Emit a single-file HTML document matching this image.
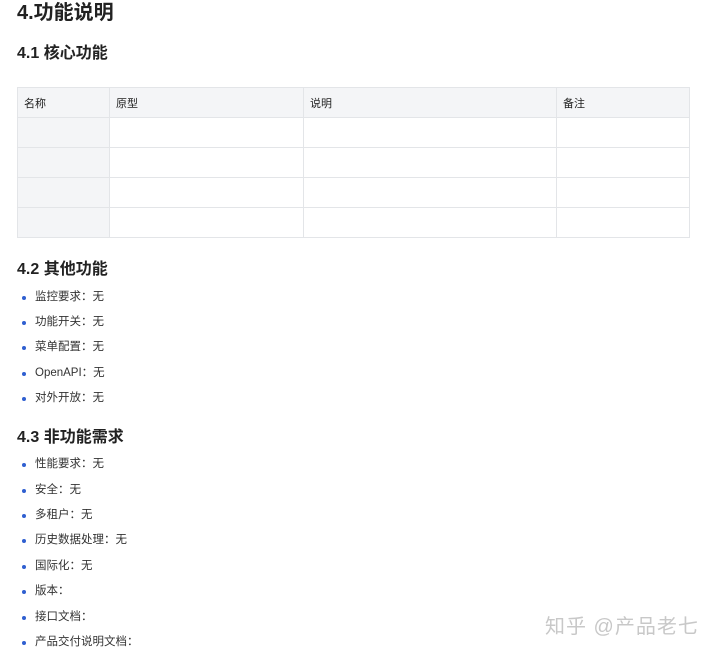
<!DOCTYPE html>
<html><head><meta charset="utf-8"><style>
body{margin:0;width:720px;height:651px;background:#fff;font-family:"Liberation Sans","Noto Sans CJK SC",sans-serif;color:#222;position:relative;overflow:hidden}
h1,h2{margin:0;font-weight:bold;position:absolute;left:17px;line-height:1}
h1{font-size:20px;top:3px}
h2{font-size:16px}
table{position:absolute;left:17px;top:87px;border-collapse:collapse;font-size:11px}
td{border:1px solid #e3e5e8;height:29px;padding:0 6px;vertical-align:middle}
tr:first-child td{background:#f4f5f7}
td:first-child{background:#f4f5f7}
.li{position:absolute;left:35px;font-size:11.5px;line-height:1;color:#333}
.li:before{content:"";position:absolute;left:-13px;top:4px;width:4px;height:4px;border-radius:50%;background:#2f5fd0}
.wm{position:absolute;left:545px;top:610px;font-size:20px;color:#c8c8c8;letter-spacing:1px}
</style></head><body>
<h1>4.功能说明</h1>
<h2 style="top:46px">4.1 核心功能</h2>
<table>
<tr><td style="width:79px">名称</td><td style="width:181px">原型</td><td style="width:240px">说明</td><td style="width:120px">备注</td></tr>
<tr><td></td><td></td><td></td><td></td></tr>
<tr><td></td><td></td><td></td><td></td></tr>
<tr><td></td><td></td><td></td><td></td></tr>
<tr><td></td><td></td><td></td><td></td></tr>
</table>
<h2 style="top:262px">4.2 其他功能</h2>
<div class="li" style="top:292px">监控要求：无</div>
<div class="li" style="top:317px">功能开关：无</div>
<div class="li" style="top:342px">菜单配置：无</div>
<div class="li" style="top:368px">OpenAPI：无</div>
<div class="li" style="top:393px">对外开放：无</div>
<h2 style="top:430px">4.3 非功能需求</h2>
<div class="li" style="top:459px">性能要求：无</div>
<div class="li" style="top:485px">安全：无</div>
<div class="li" style="top:510px">多租户：无</div>
<div class="li" style="top:535px">历史数据处理：无</div>
<div class="li" style="top:561px">国际化：无</div>
<div class="li" style="top:586px">版本：</div>
<div class="li" style="top:612px">接口文档：</div>
<div class="li" style="top:637px">产品交付说明文档：</div>
<div class="wm">知乎 @产品老七</div>
</body></html>
